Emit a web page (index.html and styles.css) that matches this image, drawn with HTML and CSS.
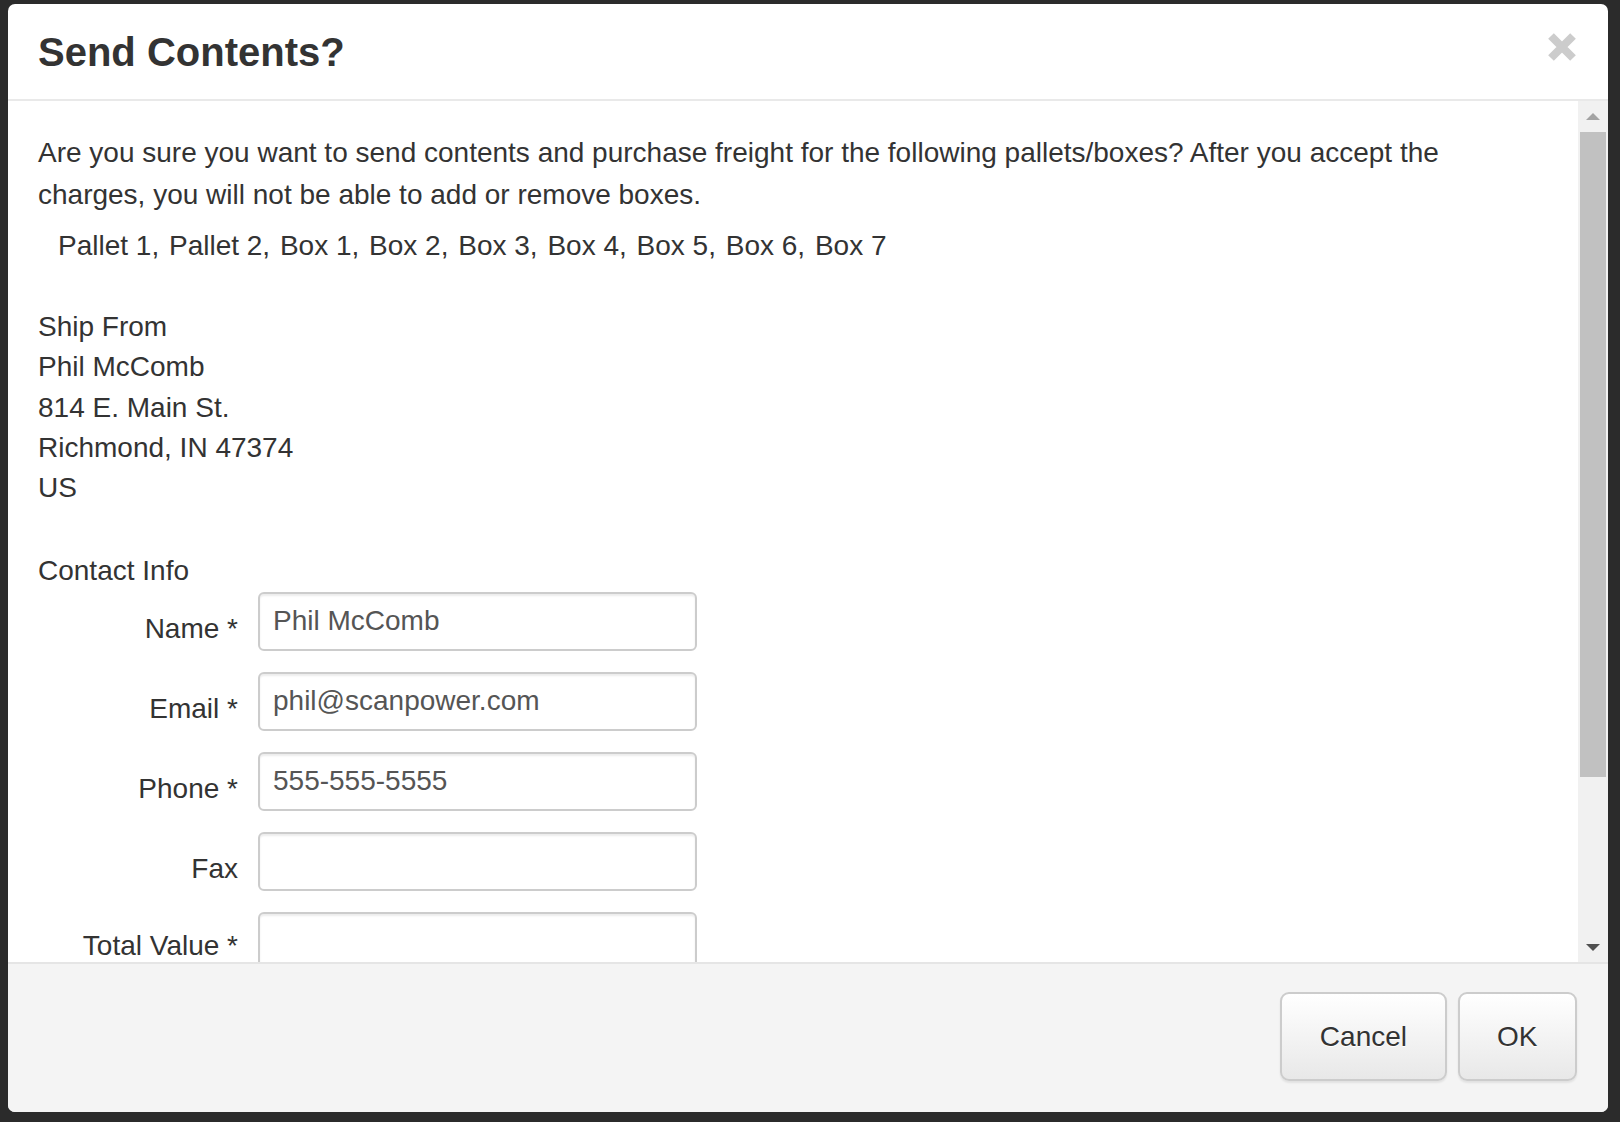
FILE: index.html
```html
<!DOCTYPE html>
<html lang="en">
<head>
<meta charset="utf-8">
<title>Send Contents?</title>
<link rel="stylesheet" href="styles.css">
</head>
<body>
<div class="backdrop">
  <div class="modal" role="dialog">
    <div class="modal-header">
      <h4 class="modal-title">Send Contents?</h4>
      <button class="close" type="button" aria-label="Close">
        <svg width="28" height="28" viewBox="0 0 28 28"><path d="M3 3 L25 25 M25 3 L3 25" stroke="#cccccc" stroke-width="8" fill="none"/></svg>
      </button>
    </div>
    <div class="modal-body">
      <div class="body-content">
        <p class="intro">Are you sure you want to send contents and purchase freight for the following pallets/boxes? After you accept the charges, you will not be able to add or remove boxes.</p>
        <div class="box-list"><span class="item">Pallet 1,</span> <span class="item">Pallet 2,</span> <span class="item">Box 1,</span> <span class="item">Box 2,</span> <span class="item">Box 3,</span> <span class="item">Box 4,</span> <span class="item">Box 5,</span> <span class="item">Box 6,</span> <span class="item">Box 7</span></div>
        <div class="address">
          <div>Ship From</div>
          <div>Phil McComb</div>
          <div>814 E. Main St.</div>
          <div>Richmond, IN 47374</div>
          <div>US</div>
        </div>
        <div class="contact-title">Contact Info</div>
        <form class="contact-form">
          <div class="form-row"><label class="control-label">Name *</label><input class="form-control" type="text" value="Phil McComb"></div>
          <div class="form-row"><label class="control-label">Email *</label><input class="form-control" type="text" value="phil@scanpower.com"></div>
          <div class="form-row"><label class="control-label">Phone *</label><input class="form-control" type="text" value="555-555-5555"></div>
          <div class="form-row"><label class="control-label">Fax</label><input class="form-control" type="text" value=""></div>
          <div class="form-row"><label class="control-label">Total Value *</label><input class="form-control" type="text" value=""></div>
        </form>
      </div>
      <div class="scrollbar">
        <div class="sb-btn"><span class="tri-up"></span></div>
        <div class="sb-thumb"></div>
        <div class="sb-track"></div>
        <div class="sb-btn"><span class="tri-down"></span></div>
      </div>
    </div>
    <div class="modal-footer">
      <button class="btn" type="button">Cancel</button>
      <button class="btn" type="button">OK</button>
    </div>
  </div>
</div>
</body>
</html>
```
FILE: styles.css
```css
html, body {
  margin: 0;
  padding: 0;
}
body {
  width: 1620px;
  height: 1122px;
  overflow: hidden;
  background: #2b2b2b;
  font-family: "Liberation Sans", Arial, sans-serif;
  color: #333333;
}
.backdrop {
  padding: 4px 12px 10px 8px;
}
.modal {
  width: 1600px;
  height: 1108px;
  background: #ffffff;
  border-radius: 7px;
  display: flex;
  flex-direction: column;
  overflow: hidden;
}
.modal-header {
  display: flex;
  justify-content: space-between;
  align-items: flex-start;
  padding: 26px 30px 25px 30px;
  border-bottom: 2px solid #e9e9e9;
  flex: none;
}
.modal-title {
  margin: 0;
  font-size: 40px;
  line-height: 44px;
  font-weight: 700;
  color: #333333;
}
.close {
  margin: 3px 2px 0 0;
  padding: 0;
  border: 0;
  background: transparent;
  width: 28px;
  height: 28px;
  display: block;
}
.close svg {
  display: block;
}
.modal-body {
  flex: 1;
  display: flex;
  min-height: 0;
}
.body-content {
  flex: 1;
  overflow: hidden;
  padding: 31px 30px 0 30px;
  font-size: 28px;
  line-height: 40px;
}
.intro {
  margin: 0;
  line-height: 42px;
}
.box-list {
  margin-top: 10px;
  padding-left: 20px;
}
.box-list .item {
  margin-right: 2px;
}
.address {
  margin-top: 41px;
  line-height: 40.3px;
}
.contact-title {
  margin-top: 43px;
}
.contact-form {
  margin: 1px 0 0 0;
}
.form-row {
  display: flex;
  align-items: flex-start;
  margin-bottom: 21px;
}
.control-label {
  width: 200px;
  text-align: right;
  padding-top: 24px;
  line-height: 26px;
  flex: none;
}
.form-row:last-child .control-label {
  padding-top: 21px;
}
.form-control {
  margin-left: 20px;
  width: 439px;
  height: 59px;
  box-sizing: border-box;
  padding: 7px 13px 8px 13px;
  border: 2px solid #cccccc;
  border-radius: 6px;
  box-shadow: inset 0 2px 2px rgba(0, 0, 0, 0.075);
  font-family: "Liberation Sans", Arial, sans-serif;
  font-size: 28px;
  line-height: 40px;
  color: #555555;
  background: #ffffff;
  outline: none;
}
.scrollbar {
  width: 30px;
  flex: none;
  background: #f1f1f1;
  display: flex;
  flex-direction: column;
}
.sb-btn {
  height: 30px;
  flex: none;
  display: flex;
  align-items: center;
  justify-content: center;
}
.tri-up {
  width: 0;
  height: 0;
  border-left: 7px solid transparent;
  border-right: 7px solid transparent;
  border-bottom: 7px solid #a3a3a3;
}
.tri-down {
  width: 0;
  height: 0;
  border-left: 7px solid transparent;
  border-right: 7px solid transparent;
  border-top: 7px solid #505050;
}
.sb-thumb {
  height: 645px;
  margin: 1px 2px 0 2px;
  background: #c1c1c1;
  flex: none;
}
.sb-track {
  flex: 1;
}
.modal-footer {
  flex: none;
  display: flex;
  justify-content: flex-end;
  gap: 11px;
  padding: 28px 31px 31px 30px;
  background: #f4f4f4;
  border-top: 2px solid #e5e5e5;
}
.btn {
  height: 89px;
  padding: 0 37.5px;
  font-family: "Liberation Sans", Arial, sans-serif;
  font-size: 28px;
  color: #333333;
  border: 2px solid #cccccc;
  border-radius: 9px;
  background: linear-gradient(to bottom, #ffffff 0%, #e8e8e8 100%);
  box-shadow: inset 0 2px 0 rgba(255, 255, 255, 0.15), 0 2px 2px rgba(0, 0, 0, 0.075);
  text-shadow: 0 1px 0 #ffffff;
}
```
